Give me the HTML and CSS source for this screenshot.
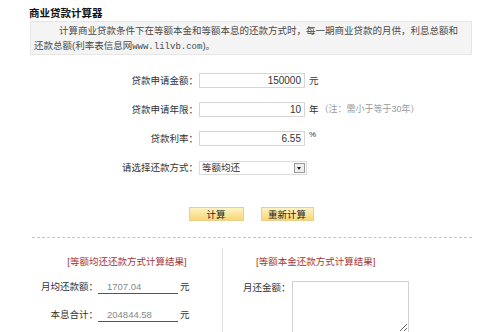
FILE: index.html
```html
<!DOCTYPE html>
<html lang="zh-CN">
<head>
  <meta charset="UTF-8">
  <title>商业贷款计算器</title>
  <link rel="stylesheet" href="styles.css">
</head>
<body>

  <div class="calc">
    <h1 class="title">商业贷款计算器</h1>
    <p class="intro">计算商业贷款条件下在等额本金和等额本息的还款方式时，每一期商业贷款的月供，利息总额和<br>还款总额(利率表信息网<span class="url">www.lilvb.com</span>)。</p>

    <form class="form" id="loan-form">
      <div class="row">
        <label class="lbl" for="amount">贷款申请金额：</label>
        <input class="num" type="text" id="amount" value="150000">
        <span class="unit">元</span>
      </div>
      <div class="row">
        <label class="lbl" for="years">贷款申请年限：</label>
        <input class="num" type="text" id="years" value="10">
        <span class="unit">年</span><span class="note">（注：需小于等于30年）</span>
      </div>
      <div class="row">
        <label class="lbl" for="rate">贷款利率：</label>
        <input class="num" type="text" id="rate" value="6.55">
        <span class="unit unit-pct">%</span>
      </div>
      <div class="row">
        <label class="lbl">请选择还款方式：</label>
        <div class="select"><span>等额均还</span><span class="drop"></span></div>
      </div>
    </form>

    <div class="btns">
      <button class="btn btn-calc" type="button">计算</button>
      <button class="btn btn-reset" type="button">重新计算</button>
    </div>

    <div class="dash"></div>

    <div class="results">
      <div class="res res-left">
        <h3 class="res-title">[等额均还还款方式计算结果]</h3>
        <div class="res-row first">
          <span class="res-lbl">月均还款额：</span>
          <span class="res-val">1707.04</span>
          <span class="res-unit">元</span>
        </div>
        <div class="res-row">
          <span class="res-lbl">本息合计：</span>
          <span class="res-val">204844.58</span>
          <span class="res-unit">元</span>
        </div>
      </div>
      <div class="res res-right">
        <h3 class="res-title">[等额本金还款方式计算结果]</h3>
        <div class="res-row2">
          <span class="res-lbl2">月还金额：</span>
          <textarea class="monthly"></textarea>
        </div>
      </div>
    </div>
  </div>

</body>
</html>
```

FILE: styles.css
```css
body { margin: 0; background: #fff; color: #333; font-family: "Liberation Sans", "Noto Sans CJK SC", sans-serif; font-size: 9.5px; }
.calc { margin-left: 30px; width: 442px; }
.title { margin: 6px 0 1px -1px; height: 14px; font-size: 10.5px; line-height: 14px; font-weight: bold; color: #111; }
.intro { box-sizing: border-box; height: 34px; margin: 0; padding: 1px 3px; border: 1px solid #e6e6e6; background: #f4f4f4; color: #4a4a4a; line-height: 15px; text-indent: 25px; white-space: nowrap; overflow: hidden; }
.url { font-family: "Liberation Mono", monospace; font-size: 9px; line-height: 10px; }

.form { margin-top: 18px; }
.row { display: flex; align-items: center; height: 15px; margin-bottom: 14px; }
.row:last-child { margin-bottom: 0; }
.lbl { width: 168px; text-align: right; color: #333; line-height: 15px; }
.num { box-sizing: border-box; width: 106px; height: 15px; margin: 0 0 0 1px; padding: 0 3px; border: 1px solid #d6d6d6; text-align: right; font-family: "Liberation Sans", sans-serif; font-size: 10px; color: #333; outline: none; }
.unit { margin-left: 4px; line-height: 15px; }
.unit-pct { align-self: flex-start; font-size: 8px; line-height: 10px; margin-top: -1px; }
.note { margin-left: 1px; color: #999; font-size: 9px; line-height: 15px; }
.select { box-sizing: border-box; display: flex; align-items: center; justify-content: space-between; width: 108px; height: 14px; margin-left: 1px; padding-left: 2px; border: 1px solid #dcdcdc; line-height: 12px; }
.drop { position: relative; box-sizing: border-box; width: 11px; height: 10px; margin-right: 1px; border: 1px solid #999; background: #eee; }
.drop::after { content: ""; position: absolute; left: 2px; top: 3px; border-left: 2.5px solid transparent; border-right: 2.5px solid transparent; border-top: 3px solid #222; }

.btns { display: flex; justify-content: center; gap: 17px; margin-top: 32px; }
.btn { box-sizing: border-box; height: 14px; padding: 0; border: 1px solid #ead18a; background: linear-gradient(#fff3c4, #f7d775); color: #222; font-family: "Noto Sans CJK SC", sans-serif; font-size: 9.5px; line-height: 11px; }
.btn-calc { width: 55px; }
.btn-reset { width: 53px; }

.dash { margin-top: 16px; margin-left: 2px; border-top: 1px dashed #c6c6c6; }

.results { display: flex; margin-top: 10px; min-height: 90px; }
.res { padding-top: 7px; }
.res-left { width: 192px; }
.res-right { flex: 1; padding-left: 20px; border-left: 1px solid #e2e2e2; }
.res-title { margin: 0; height: 14px; font-size: 9.5px; line-height: 14px; font-weight: normal; color: #a83434; }
.res-left .res-title { text-align: center; padding-left: 2px; }
.res-right .res-title { padding-left: 13px; }
.res-row { display: flex; align-items: flex-end; height: 14px; margin-top: 14px; padding-left: 10px; }
.res-row.first { margin-top: 11px; }
.res-lbl { width: 58px; text-align: right; line-height: 14px; }
.res-val { box-sizing: border-box; width: 80px; height: 14px; padding-left: 9px; border-bottom: 1px solid #555; color: #888; font-size: 9.5px; line-height: 13px; }
.res-unit { margin-left: 2px; line-height: 14px; }
.res-row2 { display: flex; align-items: flex-start; margin-top: 12px; }
.res-lbl2 { width: 49px; line-height: 14px; margin-top: 0; }
.monthly { box-sizing: border-box; width: 117px; height: 52px; margin: 0; border: 1px solid #d2d2d2; }
```
